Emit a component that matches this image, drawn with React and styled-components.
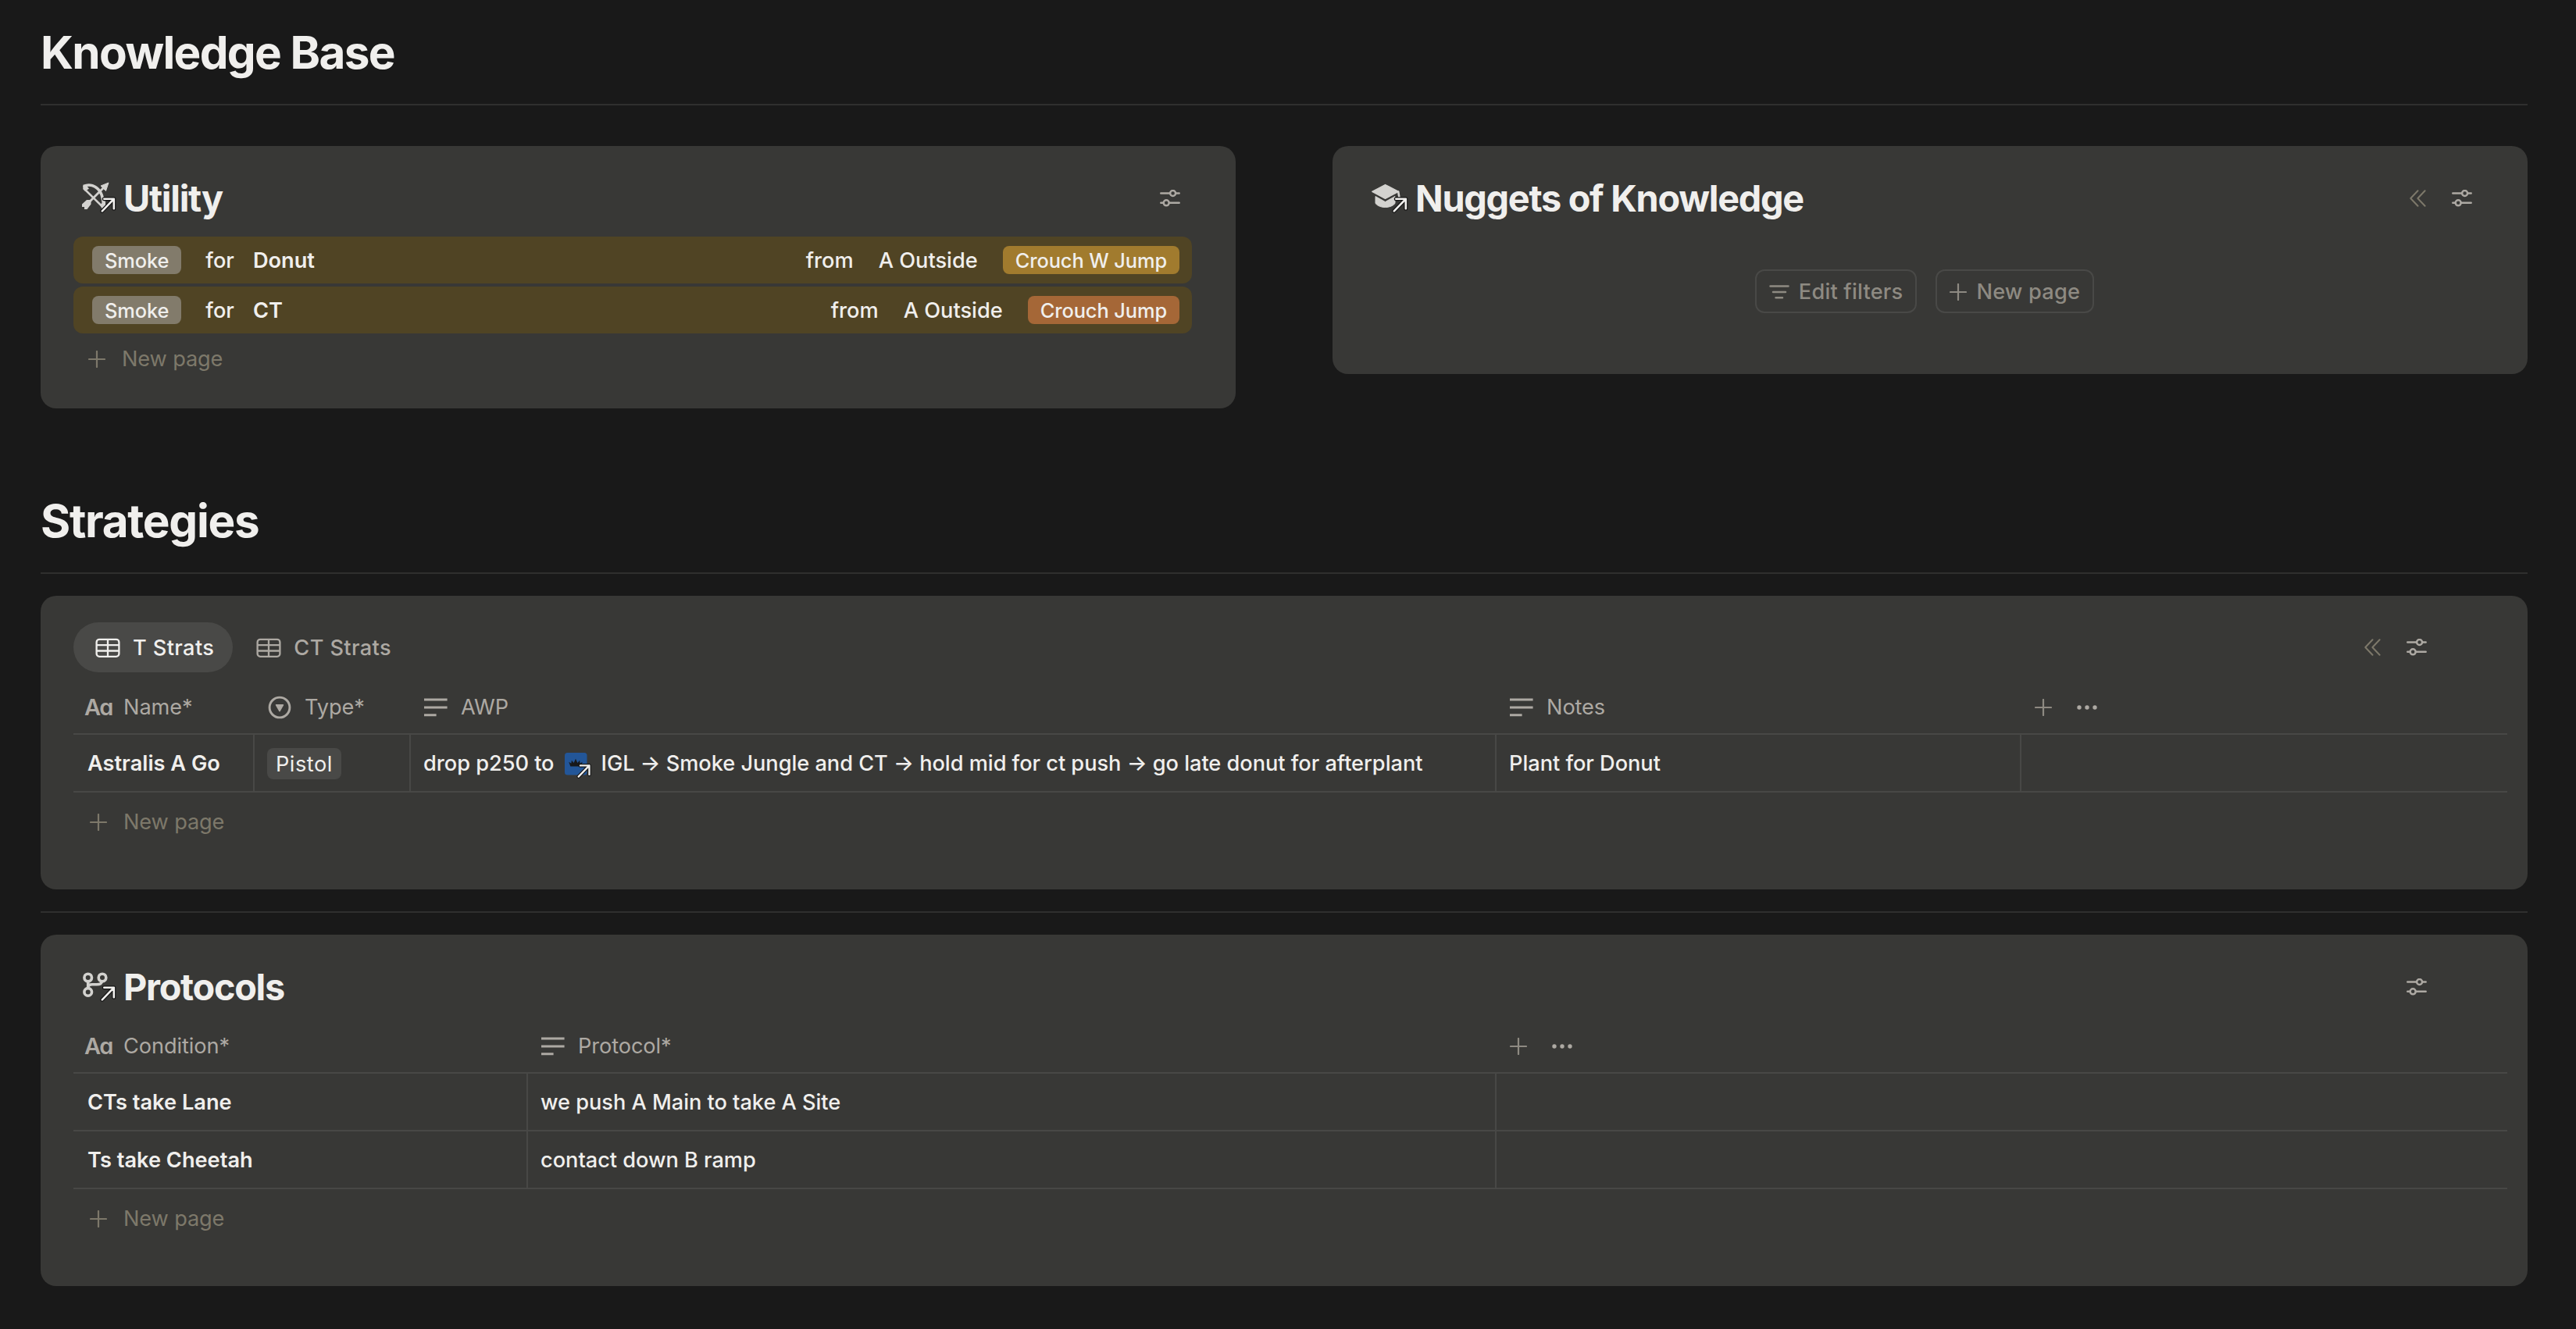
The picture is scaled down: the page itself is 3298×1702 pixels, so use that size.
import styled, { createGlobalStyle, css } from "styled-components";

const GlobalStyle = createGlobalStyle`
  * {
    box-sizing: border-box;
  }
  body {
    margin: 0;
    background: #191919;
    color: #f0efed;
    font-family: Inter, "Liberation Sans", sans-serif;
    font-size: 27.2px;
    line-height: 40px;
  }
  svg {
    display: block;
    flex: none;
  }
`;

const Page = styled.main`
  display: flex;
  flex-direction: column;
  height: 1702px;
  padding: 28px 62px 0 52px;
  overflow: hidden;
`;

const Heading = styled.h1`
  margin: ${(p) => (p.$spaced ? "105px 0 27px" : "0 0 27px")};
  font-weight: 700;
  font-size: 58.4px;
  line-height: 78px;
  letter-spacing: ${(p) => (p.$spaced ? "-1.3px" : "-1.65px")};
  white-space: nowrap;
`;

const Divider = styled.div`
  flex: none;
  height: 2px;
  background: #2f2f2e;
`;

const Columns = styled.div`
  display: grid;
  grid-template-columns: 1530px 1530px;
  justify-content: space-between;
  align-items: start;
  margin-top: 52px;
`;

const Card = styled.section`
  padding: ${(p) => p.$padding};
  border-radius: 20px;
  background: #383836;
`;

const Block = styled.div`
  margin: 28px 0;
`;

const CardHeader = styled.header`
  display: flex;
  justify-content: space-between;
  align-items: center;
  height: 60px;
  padding-left: 8px;
  margin-bottom: ${(p) => p.$gap}px;
`;

const CardTitle = styled.h2`
  display: flex;
  align-items: center;
  gap: 8px;
  margin: 0;
  font-weight: 700;
  font-size: 46.8px;
  line-height: 60px;
  letter-spacing: -1.28px;
  white-space: nowrap;
`;

const Actions = styled.div`
  display: flex;
  align-items: center;
  gap: 33px;
  padding-right: ${(p) => p.$right}px;
  padding-bottom: 1px;
  color: #ada9a3;
`;

const ListRow = styled.div`
  display: flex;
  justify-content: space-between;
  align-items: center;
  height: 60px;
  margin-bottom: 4px;
  padding: 0 16px 0 24px;
  border-radius: 12px;
  background: #504424;
  font-weight: 450;
`;

const Props = styled.div`
  display: flex;
  align-items: center;
  gap: ${(p) => p.$gap}px;
  white-space: pre;
`;

const tagColors = {
  gray: "#827b6b",
  yellow: "#a17b2e",
  orange: "#a56737",
};

const Tag = styled.span`
  height: 36px;
  padding: 0 16px;
  border-radius: 8px;
  background: ${(p) => tagColors[p.$color]};
  font-size: 25.4px;
  line-height: 37px;
  letter-spacing: -0.1px;
`;

const SelectTag = styled.span`
  height: 40px;
  padding: 0 11px;
  border-radius: 8px;
  background: #494947;
  font-weight: 400;
  line-height: 41px;
  letter-spacing: 0.5px;
`;

const Word = styled.span`
  padding-top: 1px;
`;

const Connector = styled(Word)`
  padding-left: 7px;
`;

const Strong = styled(Word)`
  font-weight: 600;
`;

const NewRow = styled.div`
  display: flex;
  align-items: center;
  height: ${(p) => (p.$compact ? 56 : 74)}px;
  padding-top: 1px;
  padding-left: ${(p) => (p.$compact ? 19 : 21)}px;
  gap: 21px;
  color: #7d786a;
  letter-spacing: -0.15px;
`;

const Buttons = styled.div`
  display: flex;
  justify-content: center;
  gap: 24px;
`;

const Button = styled.button`
  display: flex;
  align-items: center;
  height: 56px;
  padding: 1px 16px 0;
  gap: 12px;
  border: 2px solid #494947;
  border-radius: 12px;
  background: transparent;
  color: #8e8a82;
  font: inherit;
  font-weight: 500;
  letter-spacing: 0.2px;
`;

const Tabs = styled.div`
  display: flex;
  gap: 2px;
`;

const Tab = styled.div`
  display: flex;
  align-items: center;
  gap: 16px;
  height: 64px;
  padding: 1px 24px 0 28px;
  border-radius: 32px;
  color: #ada9a3;
  font-weight: 500;
  letter-spacing: 0.38px;
  ${(p) =>
    p.$active &&
    css`
      background: #494947;
      color: #f0efed;
    `}
`;

const TabBar = styled.header`
  display: flex;
  justify-content: space-between;
  align-items: center;
  margin-bottom: 10px;
`;

const gridColumns = css`
  display: grid;
  grid-template-columns: ${(p) => p.$columns};
`;

const TableHead = styled.div`
  ${gridColumns}
  height: 70px;
  padding-top: 1px;
  border-bottom: 2px solid #484846;
  color: #ada9a3;
  letter-spacing: -0.1px;
`;

const HeadCell = styled.div`
  display: flex;
  align-items: center;
  gap: 16px;
  padding-left: 16px;
`;

const HeadTools = styled.div`
  display: flex;
  align-items: center;
  gap: 32px;
  padding-left: 17px;
  color: #8e8a82;
`;

const TableRow = styled.div`
  ${gridColumns}
  height: 74px;
  border-bottom: 2px solid #484846;
`;

const Cell = styled.div`
  display: flex;
  align-items: center;
  padding-top: 1px;
  padding-left: ${(p) => (p.$title ? 18 : 16)}px;
  font-weight: ${(p) => (p.$title ? 600 : 450)};
  letter-spacing: ${(p) => (p.$title ? "0" : "-0.03px")};
  white-space: pre;
  &:not(:last-child) {
    border-right: 2px solid #484846;
  }
`;

const TextType = styled.span`
  width: 32px;
  margin-left: -2px;
  margin-right: 2px;
  font-weight: 600;
  font-size: 29px;
  letter-spacing: -1.4px;
  font-feature-settings: "cv11";
`;

const Mention = styled.span`
  display: flex;
  align-items: center;
  gap: 14px;
  margin: 0 7px 0 13px;
  font-weight: 500;
`;

const Sliders = () => (
  <svg width="26" height="22" viewBox="0 0 26 22" fill="none" stroke="#ada9a3" strokeWidth="2.5" strokeLinecap="round">
    <path d="M1.3 4.5H12.6M20.4 4.5H24.7M1.3 16.8H4.2M12 16.8H24.7" />
    <circle cx="16.6" cy="4.5" r="3.5" />
    <circle cx="8.2" cy="16.8" r="3.5" />
  </svg>
);

const Chevrons = () => (
  <svg width="21" height="22" viewBox="0 0 21 22" fill="none" stroke="#7d786a" strokeWidth="2" strokeLinecap="round" strokeLinejoin="round">
    <path d="M10.5 1.3L1.3 11L10.5 20.7M19.6 1.3L10.4 11L19.6 20.7" />
  </svg>
);

const Plus = () => (
  <svg width="22" height="22" viewBox="0 0 22 22" stroke="currentColor" strokeWidth="2.2" strokeLinecap="round">
    <path d="M11 1V21M1 11H21" />
  </svg>
);

const Dots = () => (
  <svg width="26" height="8" viewBox="0 0 26 8" fill="#ada9a3">
    <circle cx="3" cy="4" r="2.7" />
    <circle cx="13" cy="4" r="2.7" />
    <circle cx="23" cy="4" r="2.7" />
  </svg>
);

const FilterLines = () => (
  <svg width="26" height="20" viewBox="0 0 26 20" stroke="currentColor" strokeWidth="2.5" strokeLinecap="round">
    <path d="M1.5 2.5H24.5M5 10H21M8.5 17.3H17" />
  </svg>
);

const TableIcon = () => (
  <svg width="32" height="26" viewBox="0 0 32 26" fill="none" stroke="currentColor" strokeWidth="2.3">
    <rect x="1.6" y="1.8" width="28.8" height="22" rx="3.6" />
    <path d="M1.6 9.1H30.4M1.6 16.5H30.4M16 1.8V23.8" />
  </svg>
);

const SelectType = () => (
  <svg width="32" height="32" viewBox="0 0 32 32" fill="none">
    <circle cx="16" cy="16" r="12.9" stroke="currentColor" strokeWidth="2.9" />
    <path d="M11.6 12.8H20.4L16 20.6Z" fill="currentColor" stroke="currentColor" strokeWidth="1.6" strokeLinejoin="round" />
  </svg>
);

const LinesType = () => (
  <svg width="32" height="26" viewBox="0 0 32 26" stroke="currentColor" strokeWidth="3">
    <path d="M1 3.1H30.6M1 13H30.6M1 22.7H16.6" />
  </svg>
);

// Small "linked page" arrow, drawn over the corner of another icon
const LinkArrow = ({ x, y, s = 1 }) => (
  <g transform={`translate(${x} ${y}) scale(${s})`} fill="none" strokeLinecap="round" strokeLinejoin="round">
    <path d="M4 1.5H16.5V14M16.5 1.5L1.5 17" stroke="#151515" strokeWidth="5" />
    <path d="M4 1.5H16.5V14M16.5 1.5L1.5 17" stroke="#f0efed" strokeWidth="2.6" />
  </g>
);

const BowIcon = () => (
  <svg width="48" height="44" viewBox="0 0 48 44" overflow="visible">
    <g fill="none" stroke="#d3d2cf">
      <path d="M5 6.5C13 3 20.5 6 25.5 12.5C29.5 18 30.5 25 30.5 33" strokeWidth="3.6" />
      <path d="M5 9L31 34.5" strokeWidth="2.5" />
      <path d="M8 31L32 7" strokeWidth="2.8" />
    </g>
    <path d="M37 2L27 6L33.5 12.5Z" fill="#d3d2cf" stroke="#d3d2cf" strokeWidth="1" />
    <path d="M9 24H14.5V29.5L9.5 36H6V33H3V29.5Z" fill="#d3d2cf" />
    <path d="M4 5.5L9 6L12 9.5L7 13L4.5 10Z" fill="#d3d2cf" />
    <path d="M26 30L33 25V36H29Z" fill="#d3d2cf" />
    <LinkArrow x={27.3} y={21.3} />
  </svg>
);

const CapIcon = () => (
  <svg width="48" height="44" viewBox="0 0 48 44" overflow="visible">
    <g fill="#d3d2cf" stroke="#d3d2cf" strokeLinejoin="round">
      <path d="M17.5 4.5L34.5 13.3L17.5 22.3L0.8 13.3Z" strokeWidth="1.4" />
      <path d="M5 19.5L17.5 26.5L30 19.5V28.5C27 32 22.5 33.5 17.5 33.5S8 32 5 28.5Z" strokeWidth="1" />
      <path d="M34.2 13.5L36 24" fill="none" strokeWidth="2.6" strokeLinecap="round" />
    </g>
    <LinkArrow x={27.3} y={21.3} />
  </svg>
);

const BranchIcon = () => (
  <svg width="48" height="44" viewBox="0 0 48 44" overflow="visible">
    <g fill="none" stroke="#d3d2cf" strokeWidth="3.6">
      <circle cx="10.7" cy="10" r="4.8" />
      <circle cx="29" cy="10" r="4.8" />
      <circle cx="10.7" cy="28.4" r="4.8" />
      <path d="M10.7 14.5V24M28.5 14.5C28 18.5 25.5 18.8 22 18.8H16C13 18.8 11.2 20 10.7 22.5" />
    </g>
    <LinkArrow x={27.3} y={21.3} />
  </svg>
);

const CrownIcon = () => (
  <svg width="33" height="34" viewBox="0 0 33 34" overflow="visible">
    <rect x="0" y="3" width="28.5" height="28.5" rx="3.5" fill="#235698" />
    <path d="M7.3 20.5L5.3 14.8L8.3 16.8L8.9 12.8L11.6 16L14 10.8L16.4 16L19.1 12.8L19.7 16.8L22.7 14.8L20.7 20.5Z" fill="#17181a" />
    <LinkArrow x={16.3} y={18} s={0.92} />
  </svg>
);

const headIcons = {
  title: <TextType>Aa</TextType>,
  select: <SelectType />,
  text: <LinesType />,
};

function Head({ columns, fields }) {
  return (
    <TableHead $columns={columns}>
      {fields.map(([type, label]) => (
        <HeadCell key={label}>
          {headIcons[type]}
          {label}
        </HeadCell>
      ))}
      <HeadTools>
        <Plus />
        <Dots />
      </HeadTools>
    </TableHead>
  );
}

const utilities = [
  { target: "Donut", from: "A Outside", how: "Crouch W Jump", color: "yellow" },
  { target: "CT", from: "A Outside", how: "Crouch Jump", color: "orange" },
];

const protocols = [
  ["CTs take Lane", "we push A Main to take A Site"],
  ["Ts take Cheetah", "contact down B ramp"],
];

const stratColumns = "232px 200px 1390px 672px 1fr";
const protocolColumns = "582px 1240px 1fr";

export default function App() {
  return (
    <Page>
      <GlobalStyle />
      <Heading>Knowledge Base</Heading>
      <Divider />

      <Columns>
        <Card $padding="37px 56px 36px 42px">
          <CardHeader $gap={19}>
            <CardTitle>
              <BowIcon />
              Utility
            </CardTitle>
            <Actions $right={15}>
              <Sliders />
            </Actions>
          </CardHeader>
          {utilities.map((u) => (
            <ListRow key={u.target}>
              <Props $gap={24}>
                <Tag $color="gray">Smoke</Tag>
                <Connector>for</Connector>
                <Strong>{u.target}</Strong>
              </Props>
              <Props $gap={32}>
                <Word>from</Word>
                <Word>{u.from}</Word>
                <Tag $color={u.color}>{u.how}</Tag>
              </Props>
            </ListRow>
          ))}
          <NewRow $compact>
            <Plus />
            New page
          </NewRow>
        </Card>

        <Card $padding="37px 56px 78px 42px">
          <CardHeader $gap={61}>
            <CardTitle>
              <CapIcon />
              Nuggets of Knowledge
            </CardTitle>
            <Actions $right={15}>
              <Chevrons />
              <Sliders />
            </Actions>
          </CardHeader>
          <Buttons>
            <Button>
              <FilterLines />
              Edit filters
            </Button>
            <Button>
              <Plus />
              New page
            </Button>
          </Buttons>
        </Card>
      </Columns>

      <Heading $spaced>Strategies</Heading>
      <Divider />

      <Block>
        <Card $padding="34px 26px 50px 42px">
          <TabBar>
            <Tabs>
              <Tab $active>
                <TableIcon />
                T Strats
              </Tab>
              <Tab>
                <TableIcon />
                CT Strats
              </Tab>
            </Tabs>
            <Actions $right={103}>
              <Chevrons />
              <Sliders />
            </Actions>
          </TabBar>
          <Head
            columns={stratColumns}
            fields={[
              ["title", "Name*"],
              ["select", "Type*"],
              ["text", "AWP"],
              ["text", "Notes"],
            ]}
          />
          <TableRow $columns={stratColumns}>
            <Cell $title>Astralis A Go</Cell>
            <Cell>
              <SelectTag>Pistol</SelectTag>
            </Cell>
            <Cell>
              drop p250 to
              <Mention>
                <CrownIcon />
                IGL
              </Mention>
              → Smoke Jungle and CT → hold mid for ct push → go late donut for afterplant
            </Cell>
            <Cell>Plant for Donut</Cell>
            <Cell />
          </TableRow>
          <NewRow>
            <Plus />
            New page
          </NewRow>
        </Card>
      </Block>
      <Divider />

      <Block>
        <Card $padding="37px 26px 50px 42px">
          <CardHeader $gap={11}>
            <CardTitle>
              <BranchIcon />
              Protocols
            </CardTitle>
            <Actions $right={103}>
              <Sliders />
            </Actions>
          </CardHeader>
          <Head
            columns={protocolColumns}
            fields={[
              ["title", "Condition*"],
              ["text", "Protocol*"],
            ]}
          />
          {protocols.map(([condition, protocol]) => (
            <TableRow key={condition} $columns={protocolColumns}>
              <Cell $title>{condition}</Cell>
              <Cell>{protocol}</Cell>
              <Cell />
            </TableRow>
          ))}
          <NewRow>
            <Plus />
            New page
          </NewRow>
        </Card>
      </Block>
    </Page>
  );
}
